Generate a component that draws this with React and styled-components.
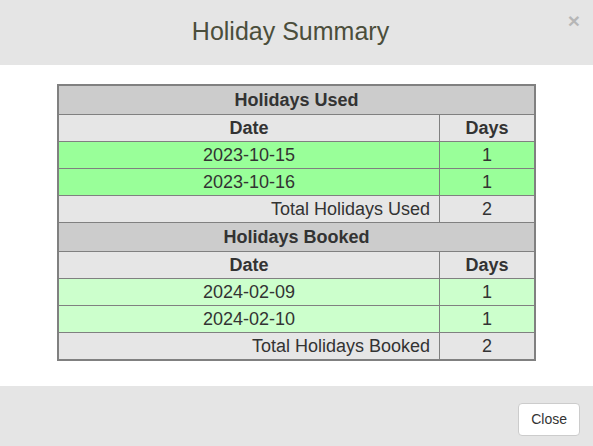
import styled, { createGlobalStyle } from "styled-components";

const GlobalStyle = createGlobalStyle`
  html, body {
    margin: 0;
    padding: 0;
    background: #fff;
    font-family: "Liberation Sans", Arial, sans-serif;
  }
`

const Modal = styled.div`
  width: 593px;
  height: 446px;
  display: flex;
  flex-direction: column;
  background: #fff;
`
const Header = styled.div`
  position: relative;
  height: 65px;
  background: #e5e5e5;
  display: flex;
  align-items: center;
  justify-content: center;
  padding-right: 12px;
`
const Title = styled.h4`
  margin: 0;
  font-size: 25px;
  font-weight: 400;
  color: #4b4e3b;
  padding-bottom: 2px;
`
const CloseX = styled.span`
  position: absolute;
  right: 13px;
  top: 10px;
  font-size: 21px;
  font-weight: 700;
  line-height: 1;
  color: #000;
  opacity: 0.2;
`
const Body = styled.div`
  flex: 1;
  padding: 19px 57px 0;
`
const Table = styled.table`
  width: 100%;
  border-collapse: collapse;
  border: 2px solid #808080;
  font-size: 18px;
  color: #333;
`
const Cell = styled.td`
  border: 1px solid #808080;
  padding: ${p => (p.$section ? "4px 9px" : "3px 9px")};
  line-height: 20px;
  text-align: ${p => p.$align || "center"};
  font-weight: ${p => (p.$bold ? 700 : 400)};
  background: ${p => p.$bg || "#e6e6e6"};
  width: ${p => p.$w || "auto"};
`
const Footer = styled.div`
  height: 60px;
  background: #e5e5e5;
  display: flex;
  align-items: flex-start;
  justify-content: flex-end;
  padding: 17px 13px 0;
  box-sizing: border-box;
`
const Button = styled.button`
  font-family: "Liberation Sans", Arial, sans-serif;
  font-size: 14px;
  color: #333;
  background: #fff;
  border: 1px solid #ccc;
  border-radius: 4px;
  padding: 7px 12px;
  line-height: 17px;
  height: 33px;
`

const sections = [
  {
    title: "Holidays Used",
    bg: "#99ff99",
    rows: [["2023-10-15", 1], ["2023-10-16", 1]],
    total: "Total Holidays Used",
  },
  {
    title: "Holidays Booked",
    bg: "#ccffcc",
    rows: [["2024-02-09", 1], ["2024-02-10", 1]],
    total: "Total Holidays Booked",
  },
]

export default function App() {
  return (
    <>
      <GlobalStyle />
      <Modal>
        <Header>
          <Title>Holiday Summary</Title>
          <CloseX>×</CloseX>
        </Header>
        <Body>
          <Table>
            <tbody>
              {sections.map(s => [
                <tr key={s.title + "-h"}>
                  <Cell colSpan={2} $bold $section $bg="#cccccc">{s.title}</Cell>
                </tr>,
                <tr key={s.title + "-c"}>
                  <Cell $bold>Date</Cell>
                  <Cell $bold $w="76px">Days</Cell>
                </tr>,
                ...s.rows.map(r => (
                  <tr key={r[0]}>
                    <Cell $bg={s.bg}>{r[0]}</Cell>
                    <Cell $bg={s.bg}>{r[1]}</Cell>
                  </tr>
                )),
                <tr key={s.title + "-t"}>
                  <Cell $align="right">{s.total}</Cell>
                  <Cell>{s.rows.length}</Cell>
                </tr>,
              ])}
            </tbody>
          </Table>
        </Body>
        <Footer>
          <Button>Close</Button>
        </Footer>
      </Modal>
    </>
  )
}
